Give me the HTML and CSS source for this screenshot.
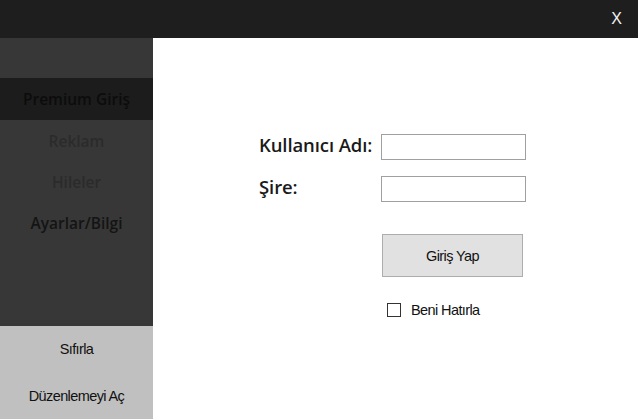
FILE: index.html
```html
<!DOCTYPE html>
<html lang="tr">
<head>
    <meta charset="UTF-8">
    <title>Premium Giriş</title>
    <link rel="stylesheet" href="styles.css">
</head>
<body>
    <div class="window">
        <div class="title-bar">
            <span class="close-btn">X</span>
        </div>
        <div class="window-body">
            <div class="sidebar">
                <div class="sidebar-top"></div>
                <div class="menu">
                    <div class="menu-item active">Premium Giriş</div>
                    <div class="menu-item dim">Reklam</div>
                    <div class="menu-item dim">Hileler</div>
                    <div class="menu-item">Ayarlar/Bilgi</div>
                </div>
                <div class="sidebar-bottom">
                    <div class="bottom-item">Sıfırla</div>
                    <div class="bottom-item">Düzenlemeyi Aç</div>
                </div>
            </div>
            <div class="main">
                <div class="login-form">
                    <label class="field-label" for="username">Kullanıcı Adı:</label>
                    <input class="field-input" type="text" id="username">
                    <label class="field-label" for="password">Şire:</label>
                    <input class="field-input" type="password" id="password">
                    <span></span>
                    <div class="form-actions">
                        <button type="button" class="login-button">Giriş Yap</button>
                        <label class="remember">
                            <span class="check-box"></span>
                            Beni Hatırla
                        </label>
                    </div>
                </div>
            </div>
        </div>
    </div>
</body>
</html>
```

FILE: styles.css
```css
:root {
    --color-title: #1e1e1e;
    --color-side: #373737;
    --color-side-dark: #1c1c1c;
    --color-side-light: #c0c0c0;
    --color-text-dark: #141414;
    --color-text-dim: #2b2b2b;
}

body {
    margin: 0;
    padding: 0;
    font-family: "Open Sans", sans-serif;
}

.window {
    width: 638px;
    height: 419px;
    display: flex;
    flex-direction: column;
    overflow: hidden;
}

/* Title bar */
.title-bar {
    height: 38px;
    background-color: var(--color-title);
    display: flex;
    justify-content: flex-end;
    align-items: center;
}
.close-btn {
    font-family: "Liberation Sans", Arial, sans-serif;
    font-size: 16px;
    color: #f2f2f2;
    margin-right: 16px;
    margin-top: -1px;
}

.window-body {
    flex: 1;
    display: flex;
}

/* Sidebar */
.sidebar {
    width: 153px;
    background-color: var(--color-side);
    display: flex;
    flex-direction: column;
}
.sidebar-top {
    height: 40px;
}
.menu {
    flex: 1;
}
.menu-item {
    height: 41px;
    display: flex;
    justify-content: center;
    align-items: center;
    font-size: 15.5px;
    font-weight: 600;
    color: var(--color-text-dark);
}
.menu-item.active {
    height: 42px;
    background-color: var(--color-side-dark);
    color: #0c0c0c;
}
.menu-item.dim {
    color: var(--color-text-dim);
}
.sidebar-bottom {
    height: 93px;
    background-color: var(--color-side-light);
    display: flex;
    flex-direction: column;
}
.bottom-item {
    flex: 1;
    display: flex;
    justify-content: center;
    align-items: center;
    font-family: "Liberation Sans", Arial, sans-serif;
    font-size: 14.5px;
    letter-spacing: -0.6px;
    color: #111;
}

/* Main content */
.main {
    flex: 1;
    background-color: #fff;
    padding: 96px 0 0 106px;
}
.login-form {
    display: grid;
    grid-template-columns: 122px 145px;
    grid-template-rows: 26px 26px auto;
    row-gap: 16px;
}
.field-label {
    font-size: 18.5px;
    line-height: 20px;
    font-weight: 600;
    color: #1a1a1a;
    align-self: center;
    white-space: nowrap;
    letter-spacing: -0.1px;
    margin-bottom: 4px;
}
.field-input {
    height: 26px;
    box-sizing: border-box;
    border: 1px solid #a0a0a0;
    margin: 0;
    padding: 2px 4px;
    outline: none;
}
.form-actions {
    display: flex;
    flex-direction: column;
    padding-top: 16px;
}
.login-button {
    width: 141px;
    height: 43px;
    margin-left: 1px;
    padding: 0;
    background-color: #e1e1e1;
    border: 1px solid #adadad;
    font-family: "Liberation Sans", Arial, sans-serif;
    font-size: 14.5px;
    letter-spacing: -0.6px;
    color: #111;
}
.remember {
    display: flex;
    align-items: center;
    gap: 10px;
    margin-top: 25px;
    margin-left: 6px;
    font-family: "Liberation Sans", Arial, sans-serif;
    font-size: 14.5px;
    letter-spacing: -0.6px;
    color: #111;
}
.check-box {
    width: 12px;
    height: 12px;
    border: 1px solid #333;
    background-color: #fff;
}
```
